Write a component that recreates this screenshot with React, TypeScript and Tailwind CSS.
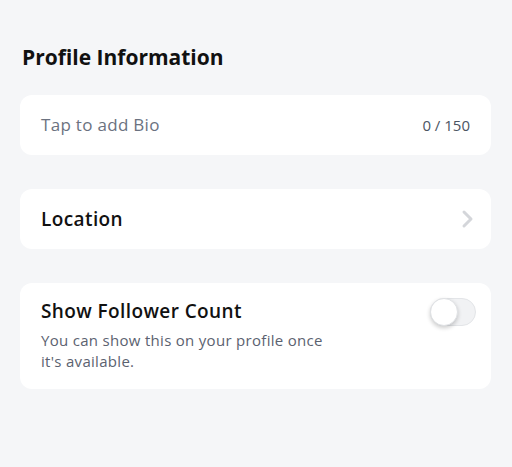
import React from "react";

export default function App() {
  return (
    <div
      className="w-[512px] h-[467px] bg-[#f5f6f8] px-5 pt-[42px]"
      style={{ fontFamily: "'Open Sans', 'Noto Sans', sans-serif" }}
    >
      <h1 className="ml-[2px] text-[21px] leading-[30px] font-bold text-[#111]">Profile Information</h1>
      <div className="mt-[23px] flex h-[60px] w-[471px] items-center justify-between rounded-[12px] bg-white pl-[21px] pr-[21px]">
        <span className="text-[17px] tracking-[0.3px] text-[#6b7280]">Tap to add Bio</span>
        <span className="text-[15px] text-[#4b5563]">0 / 150</span>
      </div>
      <div className="mt-[34px] flex h-[60px] w-[471px] items-center justify-between rounded-[12px] bg-white pl-[21px] pr-[17px]">
        <span className="text-[19px] tracking-[0.4px] font-semibold text-[#111]">Location</span>
        <svg width="14" height="20" viewBox="0 0 14 20" fill="none">
          <path d="M4 3l7 7-7 7" stroke="#d4d6da" strokeWidth="3" strokeLinecap="round" strokeLinejoin="round" />
        </svg>
      </div>
      <div className="mt-[34px] flex h-[106px] w-[471px] justify-between rounded-[12px] bg-white pl-[21px] pr-[15px] pt-[15px]">
        <div>
          <div className="text-[19px] leading-[26px] tracking-[0.4px] font-semibold text-[#111]">Show Follower Count</div>
          <div className="mt-[6px] w-[300px] text-[15px] leading-[21px] tracking-[0.3px] text-[#5b6270]">
            You can show this on your profile once it's available.
          </div>
        </div>
        <div className="relative mt-[0px] h-[28px] w-[46px] rounded-full border border-[#e3e5e8] bg-[#f1f2f4]">
          <div className="absolute left-[-1px] top-[-1px] h-[28px] w-[28px] rounded-full border border-[#e0e2e5] bg-white shadow-[0_2px_4px_rgba(0,0,0,0.2)]" />
        </div>
      </div>
    </div>
  );
}
